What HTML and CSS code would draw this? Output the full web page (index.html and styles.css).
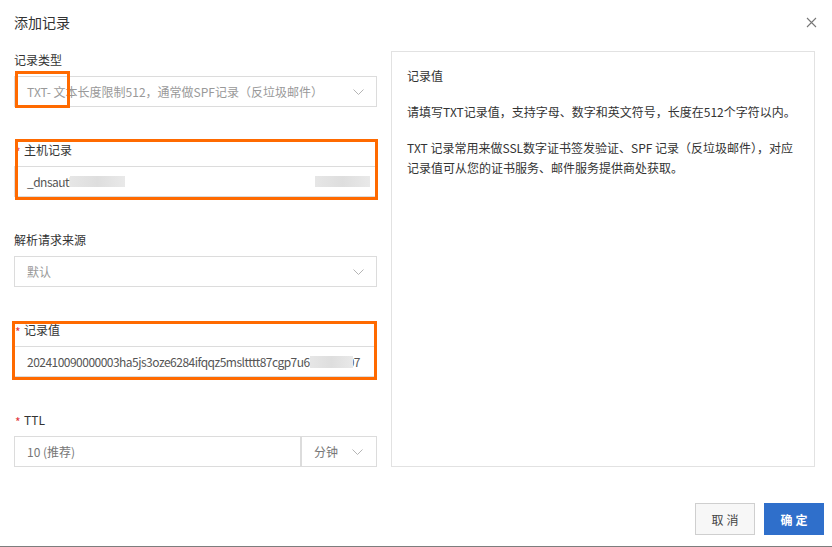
FILE: index.html
```html
<!DOCTYPE html>
<html lang="zh-CN">
<head>
<meta charset="utf-8">
<title>添加记录</title>
<link rel="stylesheet" href="styles.css">
</head>
<body>
<div class="dialog">
  <div class="header">
    <h1 class="title">添加记录</h1>
    <span class="close"><svg width="11" height="11" viewBox="0 0 11 11"><path d="M1 1 L10 10 M10 1 L1 10" stroke="#777" stroke-width="1.1" fill="none"/></svg></span>
  </div>
  <div class="content">
    <div class="form">
      <div class="field">
        <div class="label">记录类型</div>
        <div class="control select">
          <span class="value muted">TXT- 文本长度限制512，通常做SPF记录（反垃圾邮件）</span>
          <svg class="chev" width="11" height="6" viewBox="0 0 11 6"><path d="M0.5 0.5 L5.5 5.5 L10.5 0.5" stroke="#b5b5b5" stroke-width="1" fill="none"/></svg>
        </div>
      </div>
      <div class="field">
        <div class="label"><span class="star">*</span>主机记录</div>
        <div class="control input">
          <span class="value tight">_dnsauth<span class="blur blur-a"></span></span>
          <span class="blur blur-b"></span>
        </div>
      </div>
      <div class="field">
        <div class="label">解析请求来源</div>
        <div class="control select">
          <span class="value muted">默认</span>
          <svg class="chev" width="11" height="6" viewBox="0 0 11 6"><path d="M0.5 0.5 L5.5 5.5 L10.5 0.5" stroke="#b5b5b5" stroke-width="1" fill="none"/></svg>
        </div>
      </div>
      <div class="field">
        <div class="label"><span class="star">*</span>记录值</div>
        <div class="control input">
          <span class="value tight">202410090000003ha5js3oze6284ifqqz5msltttt87cgp7u6<span class="blur blur-c"></span>07</span>
        </div>
      </div>
      <div class="field">
        <div class="label"><span class="star">*</span>TTL</div>
        <div class="ttl">
          <div class="control input ttl-num"><span class="value muted2">10 (推荐)</span></div>
          <div class="control select ttl-unit">
            <span class="value muted2">分钟</span>
            <svg class="chev" width="11" height="6" viewBox="0 0 11 6"><path d="M0.5 0.5 L5.5 5.5 L10.5 0.5" stroke="#b5b5b5" stroke-width="1" fill="none"/></svg>
          </div>
        </div>
      </div>
    </div>
    <div class="help">
      <p class="help-title">记录值</p>
      <p>请填写TXT记录值，支持字母、数字和英文符号，长度在512个字符以内。</p>
      <p>TXT 记录常用来做SSL数字证书签发验证、SPF 记录（反垃圾邮件），对应<br>记录值可从您的证书服务、邮件服务提供商处获取。</p>
    </div>
  </div>
  <div class="footer">
    <button class="btn btn-cancel">取消</button>
    <button class="btn btn-ok">确定</button>
  </div>
  <div class="bottom-bar"></div>
</div>
<div class="mark mark-1"></div>
<div class="mark mark-2"></div>
<div class="mark mark-3"></div>
</body>
</html>
```
FILE: styles.css
```css
html, body {
  margin: 0;
  padding: 0;
  background: #fff;
}
body {
  width: 832px;
  height: 547px;
  overflow: hidden;
  position: relative;
  font-family: "Noto Sans CJK SC", "Noto Sans", sans-serif;
  font-size: 12px;
  color: #333;
}
.dialog {
  display: flex;
  flex-direction: column;
}
.header {
  display: flex;
  align-items: center;
  justify-content: space-between;
  padding: 12px 15px 0 14px;
  height: 20px;
}
.title {
  margin: 0;
  font-size: 14px;
  font-weight: normal;
  line-height: 20px;
  color: #333;
}
.close {
  display: flex;
  width: 11px;
  height: 11px;
}
.content {
  display: flex;
  gap: 14px;
  padding: 0 17px 0 14px;
  margin-top: 18px;
}
.form {
  width: 363px;
  display: flex;
  flex-direction: column;
  gap: 33px;
}
.label {
  line-height: 20px;
  height: 20px;
  margin-bottom: 6px;
  color: #333;
  display: flex;
  align-items: center;
}
.star {
  color: #e2383e;
  width: 10px;
  padding-left: 1px;
  box-sizing: border-box;
  font-size: 12px;
  position: relative;
  top: 2px;
}
.control {
  box-sizing: border-box;
  height: 31px;
  border: 1px solid #dcdcdc;
  display: flex;
  align-items: center;
  padding: 0 12px 0 12px;
  background: #fff;
}
.select {
  justify-content: space-between;
}
.input {
  justify-content: space-between;
  padding-right: 6px;
}
.value {
  color: #555;
  white-space: nowrap;
  display: flex;
  align-items: center;
}
.tight {
  letter-spacing: -0.52px;
}
.muted { color: #999; }
.muted2 { color: #777; }
.chev { display: block; }
.blur {
  display: inline-block;
  height: 11px;
  background: linear-gradient(90deg, #e6e6e6, #dedede 50%, #e9e9e9);
}
.blur-a { width: 55px; margin-left: -6px; }
.blur-b { width: 55px; }
.blur-c { width: 43px; margin-right: -5px; height: 12px; position: relative; z-index: 1; }
.ttl {
  display: flex;
}
.ttl-num {
  flex: 1;
}
.ttl-unit {
  width: 76px;
  padding-left: 12px;
  padding-right: 13px;
}
.help {
  flex: 1;
  margin-top: 1px;
  border: 1px solid #e2e2e2;
  padding: 14px 15px;
  color: #333;
}
.help p {
  margin: 0 0 16px 0;
  line-height: 20px;
}
.footer {
  display: flex;
  justify-content: flex-end;
  gap: 9px;
  padding-right: 8px;
  margin-top: 36px;
}
.btn {
  width: 60px;
  height: 32px;
  box-sizing: border-box;
  font-family: inherit;
  font-size: 12px;
  letter-spacing: 3px;
  padding: 0 0 0 3px;
  cursor: pointer;
}
.btn-cancel {
  background: #f7f7f7;
  border: 1px solid #cfcfcf;
  color: #444;
}
.btn-ok {
  background: #2f6fcb;
  border: 1px solid #2f6fcb;
  color: #fff;
  font-weight: bold;
}
.bottom-bar {
  margin-top: 11px;
  height: 2px;
  background: #7d7d7d;
}
.mark {
  position: absolute;
  box-sizing: border-box;
  border: 3px solid #ff6a00;
}
.mark-1 { left: 15px; top: 71px; width: 55px; height: 37px; }
.mark-2 { left: 15px; top: 139px; width: 363px; height: 61px; }
.mark-3 { left: 12px; top: 321px; width: 365px; height: 59px; }
```
